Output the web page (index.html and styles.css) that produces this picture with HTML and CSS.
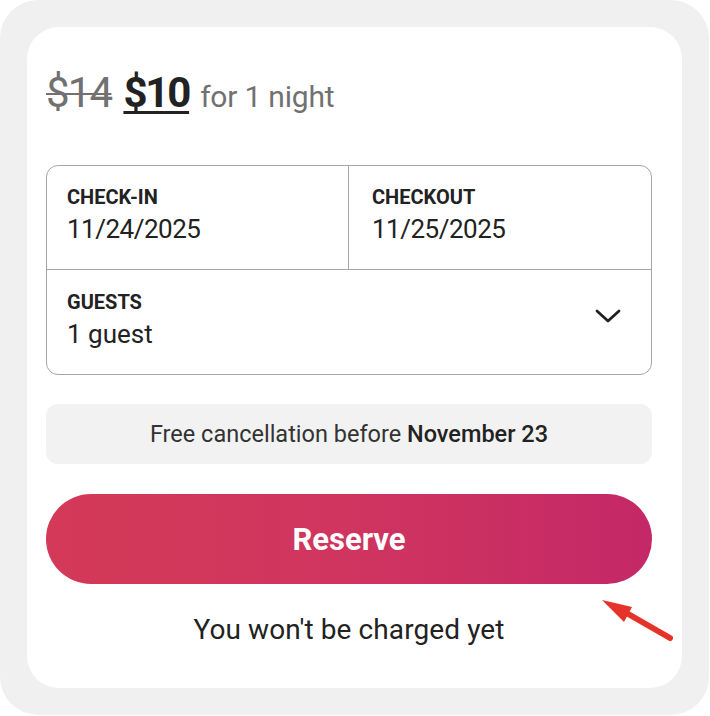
FILE: index.html
```html
<!DOCTYPE html>
<html lang="en">
<head>
<meta charset="utf-8">
<title>Reserve</title>
<link rel="stylesheet" href="styles.css">
</head>
<body>
<div class="frame">
  <div class="card">
    <div class="price">
      <span class="old">$14</span>
      <span class="new">$10</span>
      <span class="per">for 1 night</span>
    </div>

    <div class="picker">
      <div class="dates">
        <div class="cell cell-left">
          <div class="label">CHECK-IN</div>
          <div class="value">11/24/2025</div>
        </div>
        <div class="cell cell-right">
          <div class="label">CHECKOUT</div>
          <div class="value">11/25/2025</div>
        </div>
      </div>
      <div class="guests">
        <div class="guest-text">
          <div class="label">GUESTS</div>
          <div class="value value-guest">1 guest</div>
        </div>
        <svg class="chevron" width="26" height="16" viewBox="0 0 26 16" aria-hidden="true">
          <path d="M2 3 L13 13 L24 3" fill="none" stroke="#222" stroke-width="2.8" stroke-linecap="round" stroke-linejoin="round"/>
        </svg>
      </div>
    </div>

    <div class="notice">Free cancellation before <strong>November 23</strong></div>

    <button class="reserve">Reserve</button>

    <p class="note">You won't be charged yet</p>

    <svg class="arrow" width="90" height="60" viewBox="0 0 90 60" aria-hidden="true">
      <line x1="83" y1="51" x2="36" y2="24" stroke="#e5332a" stroke-width="6" stroke-linecap="round"/>
      <polygon points="15,13 45,20 37,35" fill="#e5332a"/>
    </svg>
  </div>
</div>
</body>
</html>
```

FILE: styles.css
```css
* { box-sizing: border-box; }

html, body {
  margin: 0;
  padding: 0;
  background: #ffffff;
}

body {
  font-family: Roboto, "Noto Sans", Arial, sans-serif;
  color: #222222;
}

.frame {
  width: 709px;
  height: 715px;
  background: #f0f0f0;
  border-radius: 38px;
  padding: 27px 27px 27px 27px;
}

.card {
  position: relative;
  width: 655px;
  height: 661px;
  background: #ffffff;
  border-radius: 32px;
  padding: 41px 30px 0 19px;
  display: flex;
  flex-direction: column;
}

.price {
  height: 50px;
  line-height: 50px;
  white-space: nowrap;
  display: flex;
  align-items: baseline;
}

.old {
  font-size: 42px;
  letter-spacing: -1.8px;
  color: #717171;
  text-decoration: line-through;
  text-decoration-thickness: 2px;
  margin-right: 12px;
}

.new {
  font-size: 42px;
  font-weight: 700;
  letter-spacing: -2.2px;
  color: #222222;
  text-decoration: underline;
  text-decoration-thickness: 2.5px;
  text-underline-offset: 4px;
  margin-right: 11px;
}

.per {
  font-size: 30px;
  letter-spacing: -0.2px;
  color: #717171;
}

.picker {
  margin-top: 47px;
  border: 1px solid #a6a6a6;
  border-radius: 12px;
  display: flex;
  flex-direction: column;
}

.dates {
  display: grid;
  grid-template-columns: 1fr 1fr;
  border-bottom: 1px solid #a6a6a6;
}

.cell {
  padding: 19px 20px 24px 20px;
}

.cell-left {
  border-right: 1px solid #a6a6a6;
}

.cell-right {
  padding-left: 23px;
}

.label {
  font-size: 20px;
  line-height: 24px;
  font-weight: 700;
  letter-spacing: 0;
  color: #222222;
}

.value {
  margin-top: 4px;
  font-size: 26px;
  line-height: 32px;
  letter-spacing: -0.5px;
  color: #222222;
}

.value-guest {
  letter-spacing: 0;
}

.guests {
  display: flex;
  align-items: center;
  justify-content: space-between;
  padding: 20px 30px 24px 20px;
}

.chevron {
  display: block;
  margin-top: -8px;
}

.notice {
  margin-top: 29px;
  height: 60px;
  line-height: 60px;
  background: #f2f2f2;
  border-radius: 12px;
  text-align: center;
  font-size: 23.5px;
  letter-spacing: 0;
  color: #333333;
}

.notice strong {
  font-weight: 500;
  color: #222222;
}

.reserve {
  margin-top: 30px;
  height: 90px;
  border: none;
  border-radius: 45px;
  background: linear-gradient(to right, #d43958 0%, #cf355f 50%, #c42867 100%);
  color: #ffffff;
  font-family: Roboto, "Noto Sans", Arial, sans-serif;
  font-size: 31px;
  font-weight: 700;
  letter-spacing: 0;
  padding: 0;
}

.note {
  margin: 30px 0 0 0;
  text-align: center;
  font-size: 28px;
  line-height: 32px;
  letter-spacing: 0.1px;
  color: #222222;
}

.arrow {
  position: absolute;
  left: 560px;
  top: 560px;
}
```
